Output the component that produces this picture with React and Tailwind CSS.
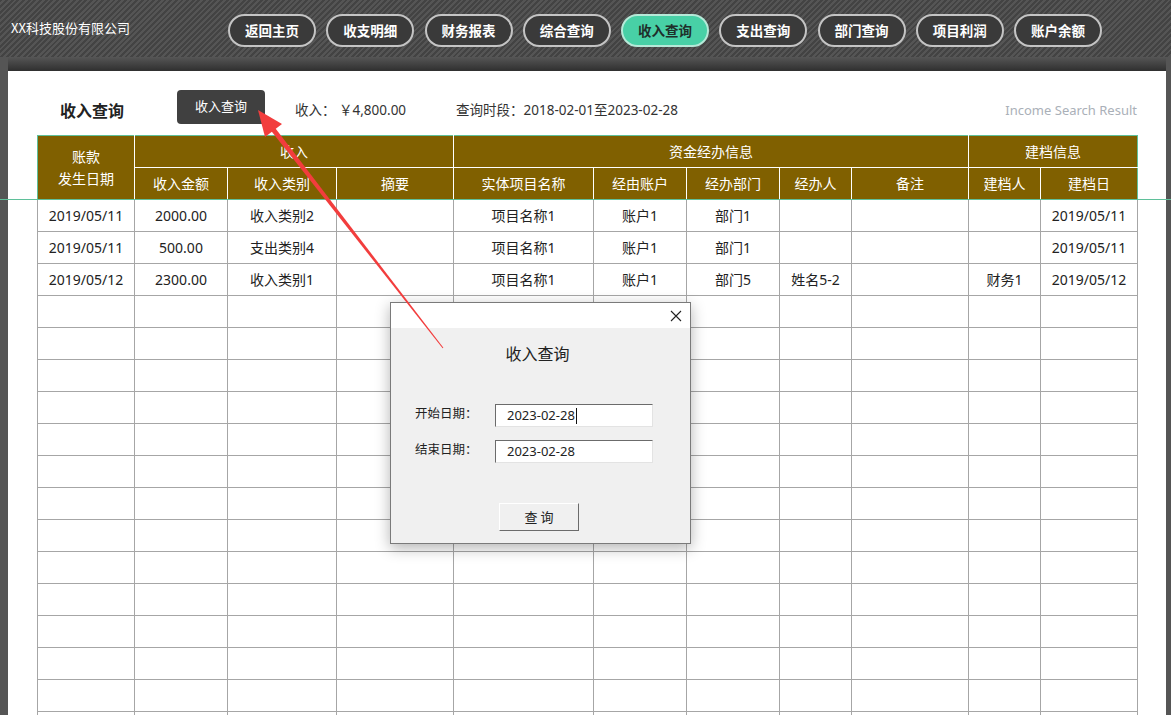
import React from "react";

const navItems = ["返回主页", "收支明细", "财务报表", "综合查询", "收入查询", "支出查询", "部门查询", "项目利润", "账户余额"];

const colWidths = [97, 93, 109, 117, 140, 93, 93, 72, 117, 72, 97];

const rows = [
  ["2019/05/11", "2000.00", "收入类别2", "", "项目名称1", "账户1", "部门1", "", "", "", "2019/05/11"],
  ["2019/05/11", "500.00", "支出类别4", "", "项目名称1", "账户1", "部门1", "", "", "", "2019/05/11"],
  ["2019/05/12", "2300.00", "收入类别1", "", "项目名称1", "账户1", "部门5", "姓名5-2", "", "财务1", "2019/05/12"],
];

const emptyRows = Array.from({ length: 14 }, () => Array(11).fill(""));

export default function App() {
  const allRows = [...rows, ...emptyRows];
  return (
    <div className="relative w-[1171px] h-[715px] overflow-hidden bg-white font-['Noto_Sans','Noto_Sans_CJK_SC',sans-serif]">
      {/* Header */}
      <div className="h-[57px] flex items-center pl-[11px] bg-[repeating-linear-gradient(135deg,#434343_0px,#434343_2px,#555555_2px,#555555_4px)]">
        <span className="w-[217px] text-[13px] text-white font-['Noto_Sans_CJK_SC',sans-serif] leading-none -mt-[2px]">XX科技股份有限公司</span>
        <div className="flex gap-[10.25px] mt-[4px]">
          {navItems.map((n) => {
            const active = n === "收入查询";
            return (
              <div
                key={n}
                className={
                  "w-[88px] h-[33px] rounded-full border-2 flex items-center justify-center text-[13.5px] font-bold font-['Noto_Sans_CJK_SC',sans-serif] " +
                  (active
                    ? "bg-[#48d0a6] border-[#b5e9d8] text-[#1f2f2a]"
                    : "bg-[#3a3a3a] border-[#c4c4c4] text-white")
                }
              >
                {n}
              </div>
            );
          })}
        </div>
      </div>

      {/* Body */}
      <div className="flex h-[658px] overflow-hidden">
        <div className="w-[8px] shrink-0 bg-[#555555]" />
        <div className="flex-1 flex flex-col overflow-hidden">
          <div className="h-[14px] shrink-0 bg-[linear-gradient(to_bottom,#565656,#2f2f2f)]" />
          <div className="flex-1 bg-white">
            {/* title row */}
            <div className="flex items-center mt-[19px] h-[34px] pr-[29px]">
              <span className="ml-[52px] mt-[6px] w-[64px] text-[16px] font-bold text-[#222] font-['Noto_Sans_CJK_SC',sans-serif]">收入查询</span>
              <div className="ml-[53px] w-[88px] h-[34px] rounded-[4px] bg-[#404040] text-white text-[13px] flex items-center justify-center">收入查询</div>
              <span className="ml-[30px] mt-[7px] w-[161px] text-[13.5px] text-[#333]">收入：&nbsp;￥4,800.00</span>
              <span className="mt-[7px] text-[13.5px] text-[#333]">查询时段：2018-02-01至2023-02-28</span>
              <span className="ml-auto mt-[7px] text-[13px] text-[#aab0b8]">Income Search Result</span>
            </div>
            {/* table */}
            <table className="ml-[29px] mt-[11px] table-fixed border-collapse w-[1100px]">
              <colgroup>
                {colWidths.map((w, i) => (
                  <col key={i} style={{ width: w }} />
                ))}
              </colgroup>
              <thead>
                <tr className="h-[32px] bg-[#806000] text-white text-[14px]">
                  <th rowSpan={2} className="font-normal border border-white border-t-[#5fc09a] border-l-[#5fc09a] leading-[22px]">
                    账款<br />发生日期
                  </th>
                  <th colSpan={3} className="font-normal border border-white border-t-[#5fc09a]">收入</th>
                  <th colSpan={5} className="font-normal border border-white border-t-[#5fc09a]">资金经办信息</th>
                  <th colSpan={2} className="font-normal border border-white border-t-[#5fc09a] border-r-[#5fc09a]">建档信息</th>
                </tr>
                <tr className="h-[32px] bg-[#806000] text-white text-[14px]">
                  {["收入金额", "收入类别", "摘要", "实体项目名称", "经由账户", "经办部门", "经办人", "备注", "建档人", "建档日"].map((h, i) => (
                    <th key={h} className={"font-normal border border-white border-b-[#5fc09a] " + (i === 9 ? "border-r-[#5fc09a]" : "")}>
                      {h}
                    </th>
                  ))}
                </tr>
              </thead>
              <tbody>
                {allRows.map((r, ri) => (
                  <tr key={ri} className="h-[32px]">
                    {r.map((c, ci) => (
                      <td key={ci} className={"border border-[#a6a6a6] text-center text-[14px] text-[#222] p-0 " + (ri === 0 ? "border-t-[#5fc09a]" : "")}>
                        {c}
                      </td>
                    ))}
                  </tr>
                ))}
              </tbody>
            </table>
          </div>
        </div>
        <div className="w-[5px] shrink-0 bg-[#555555]" />
      </div>

      {/* freeze line */}
      <div className="absolute left-0 top-[199px] w-full h-px bg-[#5fc09a]" />

      {/* Dialog */}
      <div className="absolute left-[390px] top-[302px] w-[301px] h-[242px] border border-[#7a7a7a] bg-[#f0f0f0] shadow-[0_4px_14px_rgba(0,0,0,0.3)] flex flex-col">
        <div className="h-[25px] bg-white flex justify-end items-center pr-[8px]">
          <svg width="12" height="12" viewBox="0 0 12 12" className="text-[#222]">
            <path d="M1 1 L11 11 M11 1 L1 11" stroke="currentColor" strokeWidth="1.1" />
          </svg>
        </div>
        <div className="text-center text-[16px] text-[#222] mt-[13px] leading-[24px] font-['Noto_Sans_CJK_SC',sans-serif] pr-[6px]">收入查询</div>
        <div className="flex items-center mt-[39px] h-[23px]">
          <span className="ml-[24px] w-[80px] text-[12.5px] text-[#222] -mt-[3px]">开始日期：</span>
          <div className="w-[158px] h-[23px] bg-white border border-t-[#6b6b6b] border-l-[#6b6b6b] border-b-[#e3e3e3] border-r-[#e3e3e3] flex items-center pl-[11px] text-[13px] text-[#222]">
            <span>2023-02-28</span>
            <span className="w-px h-[16px] bg-[#111] ml-[1px]" />
          </div>
        </div>
        <div className="flex items-center mt-[13px] h-[23px]">
          <span className="ml-[24px] w-[80px] text-[12.5px] text-[#222] -mt-[3px]">结束日期：</span>
          <div className="w-[158px] h-[23px] bg-white border border-t-[#6b6b6b] border-l-[#6b6b6b] border-b-[#e3e3e3] border-r-[#e3e3e3] flex items-center pl-[11px] text-[13px] text-[#222]">
            <span>2023-02-28</span>
          </div>
        </div>
        <div className="mt-[40px] ml-[108px] w-[80px] h-[28px] border border-t-white border-l-white border-b-[#6b6b6b] border-r-[#6b6b6b] bg-[#f0f0f0] flex items-center justify-center text-[13px] text-[#222] font-['Noto_Sans_CJK_SC',sans-serif]">
          查 询
        </div>
      </div>

      {/* Red arrow */}
      <svg className="absolute left-0 top-0 pointer-events-none" width="1171" height="715">
        <polygon points="443.4,347.7 442.6,348.3 268.3,127.3 272.3,124.3" fill="#f23d3d" />
        <polygon points="258,110 282,124 265,137" fill="#f23d3d" />
      </svg>
    </div>
  );
}
